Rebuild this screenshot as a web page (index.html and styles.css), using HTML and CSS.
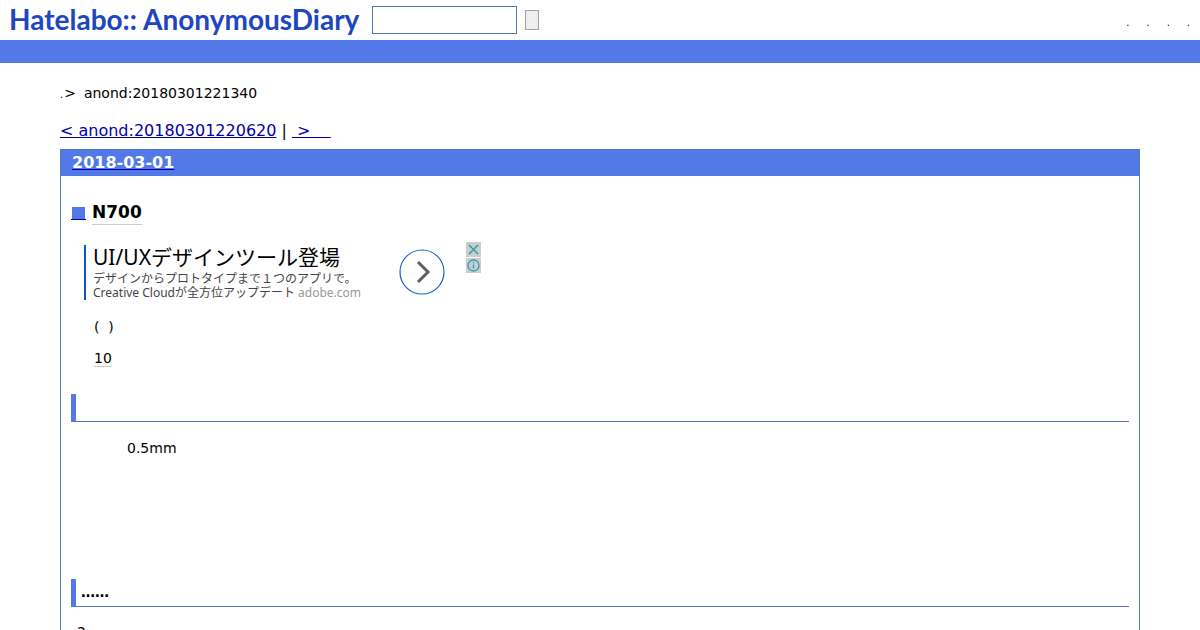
FILE: index.html
```
<!DOCTYPE html>
<html lang="ja">
<head>
    <meta charset="UTF-8">
    <meta name="viewport" content="width=device-width, initial-scale=1.0">
    <title>N700</title>
    <link rel="stylesheet" href="styles.css">
</head>
<body>
    <header>
        <a href="#" class="logo"><span>Hatelabo::</span><span>AnonymousDiary</span></a>
        <form class="search">
            <input type="text" name="word" aria-label="Search">
            <button type="submit" aria-label="Search"></button>
        </form>
        <ul class="guide">
            <li>.</li>
            <li>.</li>
            <li>.</li>
            <li>.</li>
        </ul>
    </header>
    <div class="bar"></div>

    <main>
        <p class="breadcrumb"><small>.</small><span>&gt;</span><span>anond:20180301221340</span></p>
        <nav class="pager">
            <a href="#">&lt; anond:20180301220620</a> | <a href="#">&nbsp;&gt;&nbsp;&nbsp;&nbsp;&nbsp;</a>
        </nav>

        <article class="day">
            <h2><a href="#">2018-03-01</a></h2>
            <div class="section">
                <h3><a href="#" class="mark" aria-label="Permalink"><span></span></a><a href="#" class="keyword">N700</a></h3>

                <div class="ad">
                    <div class="ad-text">
                        <strong>UI/UXデザインツール登場</strong>
                        <span>デザインからプロトタイプまで１つのアプリで。</span>
                        <span>Creative Cloudが全方位アップデート <a href="#">adobe.com</a></span>
                    </div>
                    <a href="#" class="ad-arrow" aria-label="Open">
                        <svg width="46" height="46" viewBox="0 0 46 46" fill="none">
                            <circle cx="23" cy="23" r="22" stroke="#1f5fc0" stroke-width="1.2"/>
                            <path d="M19 13l10 10-10 10" stroke="#5f5f5f" stroke-width="3"/>
                        </svg>
                    </a>
                    <div class="ad-choices">
                        <button type="button" aria-label="Close">
                            <svg width="15" height="15" viewBox="0 0 15 15" fill="none" stroke="#20a3b5" stroke-width="1.5">
                                <path d="M3 3l9 9M12 3l-9 9"/>
                            </svg>
                        </button>
                        <button type="button" aria-label="Ad information">
                            <svg width="15" height="15" viewBox="0 0 15 15" fill="none" stroke="#20a3b5" stroke-width="1.3">
                                <circle cx="7.5" cy="7.5" r="5.5"/>
                                <path d="M7.5 6.5v4M7.5 4v1.3"/>
                            </svg>
                        </button>
                    </div>
                </div>

                <p>(&nbsp; )</p>
                <p><a href="#" class="keyword">10</a></p>
                <h4></h4>
                <p class="detail">0.5mm</p>
                <h4>……</h4>
                <p class="note">2</p>
            </div>
        </article>
    </main>
</body>
</html>
```
FILE: styles.css
```
body {
    font-family: "DejaVu Sans", sans-serif;
    font-size: 14px;
    line-height: 20px;
    margin: 0;
    color: #000;
    background-color: #fff;
}

header {
    height: 40px;
    padding: 0 10px 0 9px;
    display: flex;
    align-items: center;
}

.logo {
    display: flex;
    gap: 6px;
    font-family: Lato, sans-serif;
    font-size: 28px;
    font-weight: bold;
    line-height: 38px;
    padding-bottom: 2px;
    color: #2046bf;
    text-decoration: none;
}

.search {
    display: flex;
    align-items: center;
    gap: 8px;
    margin-left: 13px;
}

.search input {
    box-sizing: border-box;
    width: 145px;
    height: 28px;
    border: 1px solid #5279a5;
}

.search button {
    width: 14px;
    height: 20px;
    padding: 0;
    border: 1px solid #a0a0a0;
    background-color: #efefef;
}

.guide {
    display: flex;
    gap: 17px;
    margin: 0 0 0 auto;
    padding: 6px 0 0;
    list-style: none;
    font-size: 10px;
}

.bar {
    height: 23px;
    background-color: #5279e7;
}

main {
    margin: 0 60px;
}

.breadcrumb {
    display: flex;
    margin: 20px 0 16px;
}

.breadcrumb small {
    font-size: 10px;
    line-height: 24px;
    height: 20px;
    margin-right: 1px;
}

.breadcrumb span {
    margin-right: 8px;
}

.pager {
    font-size: 16px;
    line-height: 24px;
    margin-bottom: 6px;
}

.pager a {
    color: #00a;
}

.day {
    border: 1px solid #5279b5;
}

.day h2 {
    margin: 0;
    padding: 0 11px;
    font-size: 16px;
    line-height: 26px;
    background-color: #5279e7;
}

.day h2 a {
    color: #fff;
    text-decoration-color: #00a;
}

.section {
    padding: 24px 10px;
}

.section h3 {
    display: flex;
    margin: 0 0 17px;
    font-size: 17px;
    line-height: 24px;
}

.mark {
    height: 12px;
    padding: 0 1px;
    margin: 7px 6px 0 0;
    border-bottom: 1px solid #00a;
}

.mark span {
    display: block;
    width: 13px;
    height: 12px;
    background-color: #5279e7;
}

.keyword {
    color: #000;
    text-decoration: none;
    border-bottom: 1px solid #ccc;
}

.section p {
    margin: 0 23px 11px;
}

.ad {
    display: flex;
    margin: 0 0 17px 13px;
}

.ad-text {
    display: flex;
    flex-direction: column;
    width: 306px;
    margin-top: 3px;
    padding-left: 7px;
    border-left: 2px solid #1055b5;
    font-family: "Noto Sans", "Noto Sans CJK JP", sans-serif;
    font-size: 12px;
    line-height: 14px;
    color: #444;
}

.ad-text strong {
    margin-bottom: 3px;
    font-size: 21px;
    font-weight: normal;
    line-height: 24px;
    color: #000;
}

.ad-text a {
    color: #999;
    text-decoration: none;
}

.ad-arrow {
    height: 46px;
    margin: 7px 21px 0 0;
}

.ad-choices {
    display: flex;
    flex-direction: column;
    gap: 1px;
}

.ad-choices button {
    display: flex;
    padding: 0;
    border: 0;
    background-color: #ccc;
}

.section h4 {
    height: 27px;
    margin: 26px 0 16px;
    padding-left: 5px;
    border-left: 5px solid #5279e7;
    border-bottom: 1px solid #5279b5;
    line-height: 27px;
}

.section .detail {
    min-height: 115px;
    margin-left: 56px;
}

.section .note {
    margin-top: -1px;
    margin-left: 6px;
}
```
